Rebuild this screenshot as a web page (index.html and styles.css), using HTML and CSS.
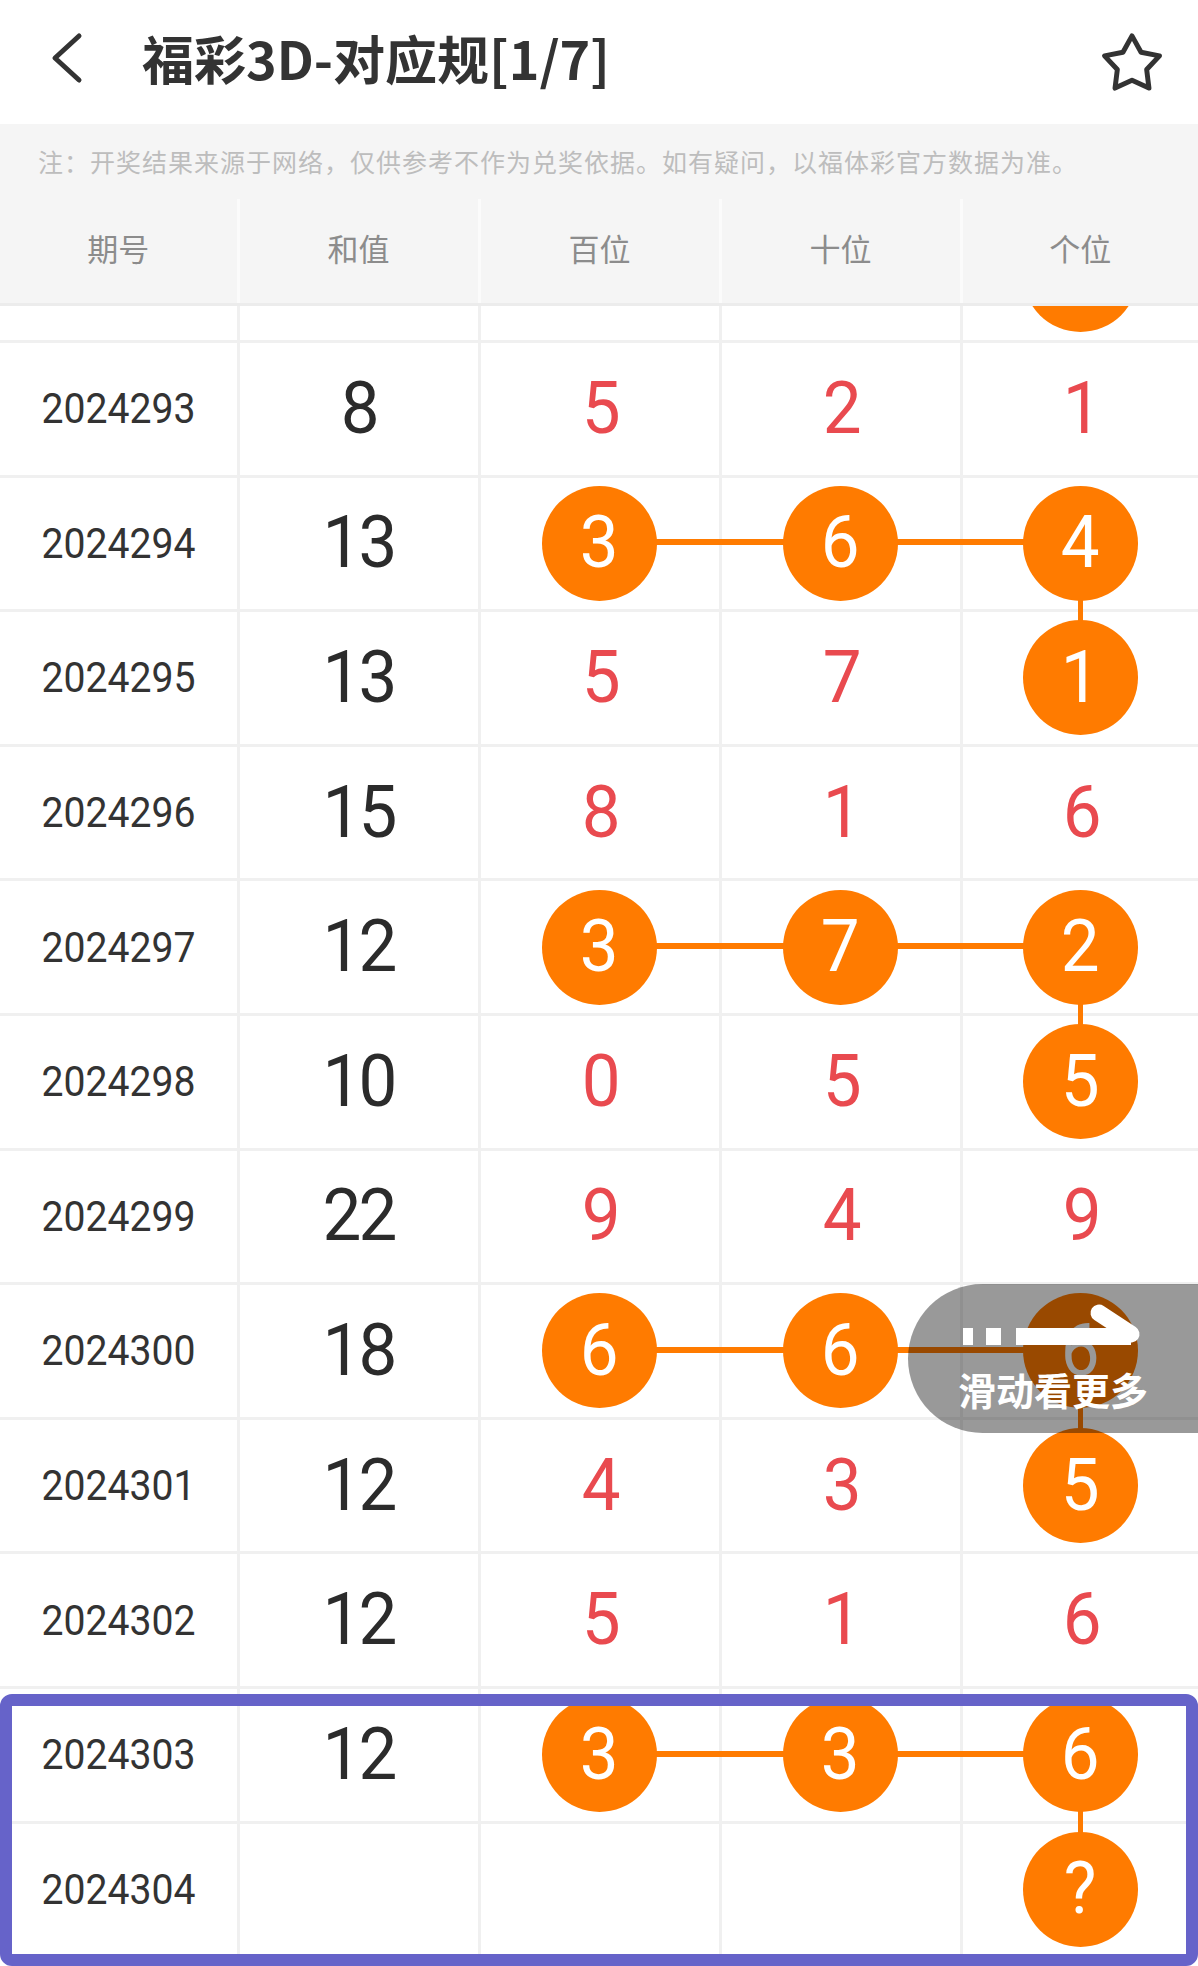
FILE: index.html
```html
<!DOCTYPE html>
<html lang="zh-CN">
<head>
<meta charset="utf-8">
<title>福彩3D-对应规</title>
<link rel="stylesheet" href="styles.css">
</head>
<body>
<div class="page">
  <header class="topbar">
    <svg class="back" viewBox="0 0 36 56" aria-hidden="true"><path d="M28 6 L4 28 L28 50"/></svg>
    <h1 class="title">福彩3D-对应规[1/7]</h1>
    <svg class="star" viewBox="0 0 24 24" aria-hidden="true"><polygon points="12,2.5 15.29,8.47 21.99,9.76 17.33,14.73 18.17,21.49 12,18.6 5.83,21.49 6.67,14.73 2.01,9.76 8.71,8.47"/></svg>
  </header>
  <div class="notice">注：开奖结果来源于网络，仅供参考不作为兑奖依据。如有疑问，以福体彩官方数据为准。</div>
  <div class="thead">
    <div class="th">期号</div>
    <div class="th">和值</div>
    <div class="th">百位</div>
    <div class="th">十位</div>
    <div class="th">个位</div>
  </div>
  <div class="tbody">
    <div class="row first">
      <div class="cell"></div><div class="cell"></div><div class="cell"></div><div class="cell"></div>
      <div class="cell"><div class="ball"></div></div>
    </div>
    <div class="row">
      <div class="cell"><span class="issue">2024293</span></div>
      <div class="cell"><span class="sum">8</span></div>
      <div class="cell"><span class="num">5</span></div>
      <div class="cell"><span class="num">2</span></div>
      <div class="cell"><span class="num">1</span></div>
    </div>
    <div class="row">
      <i class="hline"></i><i class="vline"></i>
      <div class="cell"><span class="issue">2024294</span></div>
      <div class="cell"><span class="sum">13</span></div>
      <div class="cell"><div class="ball"><span>3</span></div></div>
      <div class="cell"><div class="ball"><span>6</span></div></div>
      <div class="cell"><div class="ball"><span>4</span></div></div>
    </div>
    <div class="row">
      <div class="cell"><span class="issue">2024295</span></div>
      <div class="cell"><span class="sum">13</span></div>
      <div class="cell"><span class="num">5</span></div>
      <div class="cell"><span class="num">7</span></div>
      <div class="cell"><div class="ball"><span>1</span></div></div>
    </div>
    <div class="row">
      <div class="cell"><span class="issue">2024296</span></div>
      <div class="cell"><span class="sum">15</span></div>
      <div class="cell"><span class="num">8</span></div>
      <div class="cell"><span class="num">1</span></div>
      <div class="cell"><span class="num">6</span></div>
    </div>
    <div class="row">
      <i class="hline"></i><i class="vline"></i>
      <div class="cell"><span class="issue">2024297</span></div>
      <div class="cell"><span class="sum">12</span></div>
      <div class="cell"><div class="ball"><span>3</span></div></div>
      <div class="cell"><div class="ball"><span>7</span></div></div>
      <div class="cell"><div class="ball"><span>2</span></div></div>
    </div>
    <div class="row">
      <div class="cell"><span class="issue">2024298</span></div>
      <div class="cell"><span class="sum">10</span></div>
      <div class="cell"><span class="num">0</span></div>
      <div class="cell"><span class="num">5</span></div>
      <div class="cell"><div class="ball"><span>5</span></div></div>
    </div>
    <div class="row">
      <div class="cell"><span class="issue">2024299</span></div>
      <div class="cell"><span class="sum">22</span></div>
      <div class="cell"><span class="num">9</span></div>
      <div class="cell"><span class="num">4</span></div>
      <div class="cell"><span class="num">9</span></div>
    </div>
    <div class="row">
      <i class="hline"></i><i class="vline"></i>
      <div class="cell"><span class="issue">2024300</span></div>
      <div class="cell"><span class="sum">18</span></div>
      <div class="cell"><div class="ball"><span>6</span></div></div>
      <div class="cell"><div class="ball"><span>6</span></div></div>
      <div class="cell"><div class="ball"><span>6</span></div></div>
    </div>
    <div class="row">
      <div class="cell"><span class="issue">2024301</span></div>
      <div class="cell"><span class="sum">12</span></div>
      <div class="cell"><span class="num">4</span></div>
      <div class="cell"><span class="num">3</span></div>
      <div class="cell"><div class="ball"><span>5</span></div></div>
    </div>
    <div class="row">
      <div class="cell"><span class="issue">2024302</span></div>
      <div class="cell"><span class="sum">12</span></div>
      <div class="cell"><span class="num">5</span></div>
      <div class="cell"><span class="num">1</span></div>
      <div class="cell"><span class="num">6</span></div>
    </div>
    <div class="row">
      <i class="hline"></i><i class="vline"></i>
      <div class="cell"><span class="issue">2024303</span></div>
      <div class="cell"><span class="sum">12</span></div>
      <div class="cell"><div class="ball"><span>3</span></div></div>
      <div class="cell"><div class="ball"><span>3</span></div></div>
      <div class="cell"><div class="ball"><span>6</span></div></div>
    </div>
    <div class="row">
      <div class="cell"><span class="issue">2024304</span></div>
      <div class="cell"></div>
      <div class="cell"></div>
      <div class="cell"></div>
      <div class="cell"><div class="ball"><span>?</span></div></div>
    </div>

    <div class="swipe">
      <svg class="swipe-icon" viewBox="0 0 185 50" aria-hidden="true">
        <rect x="2" y="28" width="10" height="17"/>
        <rect x="25" y="28" width="15" height="17"/>
        <path class="bar" d="M55 36.5 H170"/>
        <path class="head" d="M138 13 L170 34"/>
      </svg>
      <div class="swipe-text">滑动看更多</div>
    </div>
    <div class="highlight"></div>
  </div>
</div>
</body>
</html>
```

FILE: styles.css
```css
html, body {
  margin: 0;
  padding: 0;
}

body {
  width: 1198px;
  height: 1966px;
  overflow: hidden;
  background: #ffffff;
  font-family: "Noto Sans CJK SC", "Noto Sans", sans-serif;
}

.page {
  width: 1198px;
}

/* ---------- top bar ---------- */
.topbar {
  height: 124px;
  box-sizing: border-box;
  padding-bottom: 8px;
  display: flex;
  align-items: center;
}

.back {
  flex: none;
  width: 36px;
  height: 56px;
  margin-left: 51px;
}

.back path {
  fill: none;
  stroke: #333333;
  stroke-width: 5;
  stroke-linecap: round;
  stroke-linejoin: round;
}

.title {
  margin: 0 0 0 55px;
  font-size: 52px;
  line-height: 1;
  font-weight: 700;
  color: #333333;
  white-space: nowrap;
}

.star {
  flex: none;
  width: 66px;
  height: 66px;
  margin-left: auto;
  margin-right: 33px;
  margin-top: 8px;
}

.star polygon {
  fill: none;
  stroke: #333333;
  stroke-width: 1.8;
  stroke-linejoin: round;
}

/* ---------- notice ---------- */
.notice {
  height: 75px;
  box-sizing: border-box;
  background: #f5f5f5;
  padding-left: 38px;
  font-size: 25px;
  line-height: 75px;
  letter-spacing: 1px;
  color: #bdbdbd;
  white-space: nowrap;
  overflow: hidden;
}

/* ---------- table grid ---------- */
.thead,
.row {
  display: grid;
  grid-template-columns: 239.5px 241px 241px 241px 1fr;
}

.thead {
  height: 107px;
  box-sizing: border-box;
  background: #f5f5f5;
  border-bottom: 3px solid #ececec;
}

.th {
  display: flex;
  align-items: center;
  justify-content: center;
  padding-bottom: 7px;
  border-right: 3px solid #fbfbfb;
  font-size: 31px;
  color: #8c8c8c;
}

.th:last-child {
  border-right: none;
}

/* ---------- table body ---------- */
.tbody {
  position: relative;
  height: 1660px;
  overflow: hidden;
}

.row {
  position: relative;
  height: 134.6px;
  box-sizing: border-box;
  border-bottom: 3px solid #f0f0f0;
}

.row.first {
  margin-top: -97.6px;
}

.cell {
  display: flex;
  align-items: center;
  justify-content: center;
  border-right: 3px solid #f0f0f0;
  min-width: 0;
}

.cell:last-child {
  border-right: none;
}

.issue {
  display: inline-block;
  font-family: Roboto, "Liberation Sans", sans-serif;
  font-size: 43px;
  line-height: 1;
  color: #333333;
  transform: scaleX(0.91);
}

.sum,
.num {
  display: inline-block;
  font-family: Roboto, "Liberation Sans", sans-serif;
  font-size: 72px;
  line-height: 1;
  letter-spacing: -3px;
  transform: scaleX(0.96);
}

.sum {
  color: #2b2b2b;
}

.num {
  color: #e94a4f;
}

.ball {
  position: relative;
  flex: none;
  width: 115px;
  height: 115px;
  border-radius: 50%;
  background: #ff7b00;
  display: flex;
  align-items: center;
  justify-content: center;
}

.ball span {
  display: inline-block;
  font-family: Roboto, "Liberation Sans", sans-serif;
  font-size: 72px;
  line-height: 1;
  color: #ffffff;
  transform: scaleX(0.96);
}

.hline {
  position: absolute;
  left: 599.5px;
  right: 118px;
  top: 50%;
  height: 6px;
  margin-top: -4px;
  background: #ff7b00;
}

.vline {
  position: absolute;
  left: 1078px;
  top: 50%;
  width: 5px;
  height: 134.6px;
  background: #ff7b00;
}

/* ---------- swipe hint overlay ---------- */
.swipe {
  position: absolute;
  top: 978px;
  left: 908px;
  right: 0;
  height: 149px;
  box-sizing: border-box;
  padding-top: 16px;
  border-radius: 75px 0 0 75px;
  background: rgba(0, 0, 0, 0.4);
  display: flex;
  flex-direction: column;
  align-items: center;
  gap: 17px;
}

.swipe-icon {
  width: 185px;
  height: 50px;
  flex: none;
}

.swipe-icon rect {
  fill: #ffffff;
}

.swipe-icon .bar {
  fill: none;
  stroke: #ffffff;
  stroke-width: 17;
  stroke-linecap: butt;
}

.swipe-icon .head {
  fill: none;
  stroke: #ffffff;
  stroke-width: 17;
  stroke-linecap: round;
}

.swipe-text {
  font-size: 38px;
  line-height: 44px;
  font-weight: 700;
  color: #ffffff;
  white-space: nowrap;
}

/* ---------- highlight frame ---------- */
.highlight {
  position: absolute;
  top: 1388px;
  left: 0;
  right: 0;
  bottom: 0;
  box-sizing: border-box;
  border: 12px solid #6663c9;
  border-radius: 12px;
}
```
